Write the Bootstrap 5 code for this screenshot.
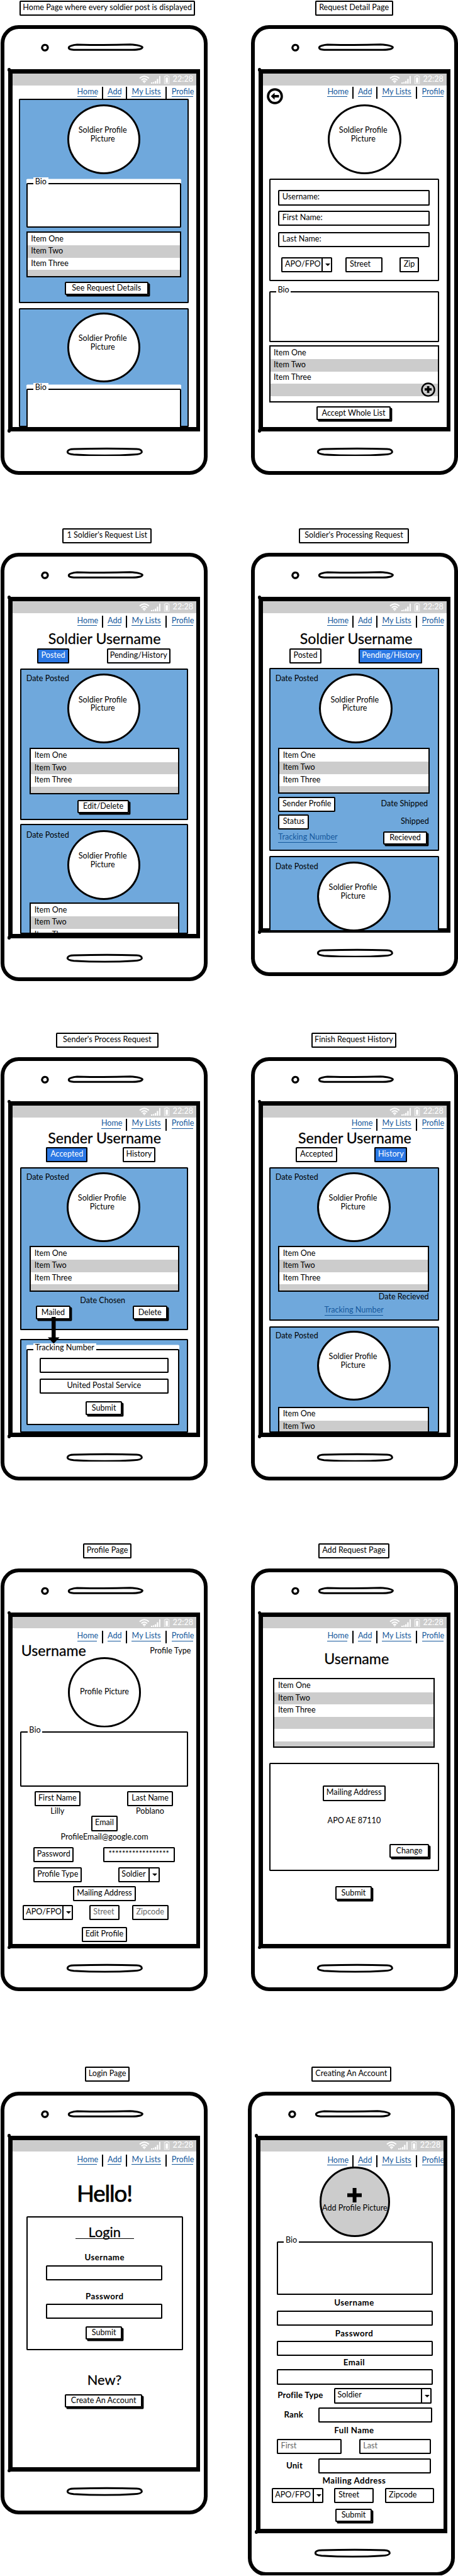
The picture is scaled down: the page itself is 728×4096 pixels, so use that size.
<!DOCTYPE html>
<html lang="en">
<head>
<meta charset="utf-8">
<meta name="viewport" content="width=device-width, initial-scale=1">
<title>Soldier request app wireframes</title>
<link href="https://cdn.jsdelivr.net/npm/bootstrap@5.3.0/dist/css/bootstrap.min.css" rel="stylesheet">
<style>
body{background:#fff;overflow:hidden}
.board{zoom:.92739;width:785px;height:4416px;padding-top:1px;display:grid;grid-template-columns:429px 356px;grid-template-rows:904.5px 864.7px 876.3px 896.9px 872.6px;color:#000;font:13.6px/16px Lato,"Liberation Sans",sans-serif;white-space:nowrap;overflow:hidden}
.board *{border-radius:0}
/* cells: odd tracks are gaps, even tracks hold the items */
.cells{display:grid;align-items:start}
.cells>:nth-child(1){grid-column:2}
.cells>:nth-child(2){grid-column:4}
.cells>:nth-child(3){grid-column:6}
.stack{display:grid;align-content:start}
.ink,.stack .btn,.tag,.field,.lister{outline:2.5px solid #000;outline-offset:-2.5px}
.tag,.field{display:block;height:26px;line-height:24px;text-align:center;background:#fff}
.board .ink,.board .tag,.board .field,.board .btn{border-radius:2px}
.tag.on{background:#2b78e4;color:#fff}
.field{text-align:left;padding-left:7px}
.ghost{color:#666}
.pick{display:flex;padding-left:6px}
.pick i{margin-left:auto;width:18.5px;border-left:2.2px solid #000;display:flex;align-items:center;justify-content:center}
.pick i::after{content:"";border:4.5px solid transparent;border-top-color:#000;border-bottom:0}
.stack .btn{display:block;height:23px;line-height:22px;padding:0;border:0;background:#fff;color:#000;font-size:inherit;box-shadow:2.6px 2.8px 0 #000}
.board .lister{display:block;background:#fff;padding-top:3px;overflow:hidden;height:79px}
.lister .list-group-item{position:static;height:21px;border:0;padding:0 8px;line-height:18.5px;color:#000;background:#fff}
.lister .list-group-item:nth-child(even){background:#ccc}
.stack .pic{width:126px;height:120px;border:3.3px solid #000;border-radius:50%;background:#fff;display:flex;align-items:center;justify-content:center;text-align:center;line-height:15px;padding:0 4px 16px 0}
.pane{background:#6fa8dc;position:relative}
.clip{overflow:hidden}
.group{position:relative;box-shadow:0 -7px 0 #fff;background:#fff}
.group>b{position:absolute;z-index:1;left:12px;top:-10px;padding:0 3px;background:#fff;font-weight:400;line-height:16px}
.dated{display:flex;padding-left:11px}
.dated>span{line-height:18px}
.mid{text-align:center}
.strong{font-weight:700;font-size:14.3px;letter-spacing:.5px;text-align:center}
.h24{font-size:25px;line-height:24px;text-align:center;font-weight:400;-webkit-text-stroke:.3px #000}
/* phone */
.phone{position:relative;width:355px;margin-left:1px;border:6.5px solid #000;border-radius:31px!important}
.top{height:69px;position:relative}
.phone svg{display:block}
.scr{margin:0 7px;border:7.6px solid #000;border-right-width:6.5px;position:relative;align-content:start}
.scr::before,.scr::after{content:"";position:absolute;left:-9px;width:5px;height:6px;background:#000;border-radius:50%}
.scr::before{top:-10px}.scr::after{bottom:-9px}
.chin{height:67px;padding:26px 0 0 105px}
.bar{background:#ccc;color:#fff;height:20px;padding-right:5px;display:flex;align-items:center;justify-content:flex-end}
.menu{display:flex;justify-content:flex-end;padding:2px 5px 0 0;flex-wrap:nowrap}
.menu a{color:#16599c;text-decoration:none;border-bottom:1.1px solid #16599c;line-height:15px;height:17px;text-align:center;margin-top:1px;padding:0}
.menu a+a{position:relative;margin-left:18.3px}
.menu a+a::before{content:"";position:absolute;left:-10px;top:-1px;width:2.2px;height:21px;background:#000}
.l-h{width:34px}.l-a{width:23px}.l-m{width:50px}.l-p{width:37px}
.lnk{color:#16599c;border-bottom:1.1px solid #16599c;text-decoration:none;line-height:16px;text-align:center}
.over{position:absolute;z-index:2}

/* title tags */
.t1{grid-template-columns:33.5px 301px}.t2{grid-template-columns:110.7px 134px}.t3{grid-template-columns:107px 153px}.t4{grid-template-columns:83.3px 188.5px}.t5{grid-template-columns:95.5px 176px}.t6{grid-template-columns:104.3px 146.5px}.t7{grid-template-columns:142.5px 83px}.t8{grid-template-columns:116.3px 122.5px}.t9{grid-template-columns:145.5px 77px}.t10{grid-template-columns:109.5px 137px}
.titles{height:42.6px}

.s1{height:621.1px;grid-template-rows:20px 23px 359px 204px}
.s1 .box,.s2 .box,.s4 .box,.s6 .box,.s8 .box{grid-template-columns:10px 292px}
.s1 .p1{height:350px;padding-top:9px;grid-template-rows:135px 83px 86px 37px}
.s1 .p2{height:204px;padding-top:7px;grid-template-rows:131px 90px}
.s1 .pc{grid-template-columns:83px 126px}.s1 .in{grid-template-columns:13px 266px}.s1 .bt{grid-template-columns:79px 143px}
.s1 .group{height:76.5px}

.s2{height:621.1px;grid-template-rows:20px 32px 128px 193px 92.5px 105px 35px}
.s2 .pc{grid-template-columns:110.5px 126px}.s2 .bt{grid-template-columns:91px 128px}
.s2 .form{height:175px;padding-top:19.5px;grid-template-rows:35.5px 36px 43px 41px}
.s2 .in{grid-template-columns:16px 260px}.s2 .ad{grid-template-columns:21.5px 87px 23px 63px 29.5px 33.5px}
.s2 .group{height:87px}.s2 .lister{height:97.5px}
.back{left:6.5px;top:24.5px}.plus{left:260px;top:63.5px}

.s3{height:585.6px;grid-template-rows:20px 32px 29px 34px 267px 188px}
.s3 .menu,.s4 .menu,.s7 .menu,.s8 .menu{padding-top:4.3px}
.s3 .box,.s5 .box{grid-template-columns:12px 288px}
.s3 .tb{grid-template-columns:42px 54.5px 64.5px 109px}
.s3 .p1{height:260px;padding-top:9px;grid-template-rows:127.4px 88.6px 35px}
.s3 .p2{height:188px;padding-top:10px;grid-template-rows:124.4px 88px}
.s3 .dated>span{width:70px}
.s3 .in,.s5 .in{grid-template-columns:17px 256px}.s3 .bt{grid-template-columns:99px 88px}

.s4{height:576.1px;grid-template-rows:20px 32px 29px 33px 322px 130px}
.s4 .h24{padding-left:5px}
.s4 .tb{grid-template-columns:45.5px 54px 64.5px 109px}
.s4 .p1{height:314px;padding-top:10px;grid-template-rows:127px 84.5px 29.5px 29px 34px}
.s4 .p1 .dated>span{width:75px}.s4 .p2 .dated>span,.s6 .dated>span{width:72px}
.s4 .p2{height:130px;padding-top:10px;z-index:1}
.s4 .in{grid-template-columns:16px 260px}
.s4 .a{grid-template-columns:16px 98px 78px 80px}.s4 .b{grid-template-columns:16px 53px 157px 48px}.s4 .c{grid-template-columns:16px 101px 79px 75px}
.s4 .a span,.s4 .b span{line-height:24px}.s4 .a .mid,.s4 .b .mid{text-align:right}
.s4 .c .lnk{margin-top:3px}

.s5{height:576.1px;grid-template-rows:20px 23px 28px 35px 294px 161px}
.s5 .tb{grid-template-columns:57px 71px 60.5px 55.5px}
.s5 .p1{height:279px;padding-top:8px;grid-template-rows:126.3px 86.2px 16.8px 40px;z-index:2}
.s5 .dated>span{width:69px}
.s5 .mid{padding-right:4px}
.s5 .bt{grid-template-columns:27px 60px 106px 60px}
.arrow{left:48px;top:256px}
.s5 .p2{height:160.5px;padding-top:17px}
.s5 .fs{grid-template-columns:11px 262px}
.s5 .group{height:131px;padding-top:15.4px;grid-template-rows:35.2px 39.4px 41px}
.s5 .f{grid-template-columns:23px 220.5px}.s5 .g{grid-template-columns:102px 62px}

.s6{height:576.1px;grid-template-rows:20px 23px 28px 35px 272px 183px}
.s6 .tb{grid-template-columns:56px 71px 64px 56px}
.s6 .p1{height:263px;padding-top:8px;grid-template-rows:126.3px 80.4px 22px 30px}
.s6 .p2{height:183px;padding-top:8px;grid-template-rows:130px 88px}
.s6 .in{grid-template-columns:16px 258px}.s6 .a{grid-template-columns:188px 86px}.s6 .b{grid-template-columns:95px 101px}

.s7{height:576.1px;grid-template-rows:20px 25px 24.5px 127.5px 101.7px 27.3px 15.5px 28.5px 24.5px 34.5px 33px 32px 37.5px 29.5px}
.s7 .ti{grid-template-columns:14px 112px 109px 70px}.s7 .ti span{line-height:25px}
.s7 .pc{grid-template-columns:94px 126px}.s7 .bi{grid-template-columns:13px 287px}.s7 .group{height:94px}
.s7 .pic{padding:0 0 2px}
.s7 .nm{grid-template-columns:37.5px 78px 80.5px 78.5px}.s7 .em{grid-template-columns:134.5px 45px}
.s7 .pw{grid-template-columns:35.5px 69px 50px 123px}.s7 .pt{grid-template-columns:35.5px 83px 62px 71px}
.s7 .ma{grid-template-columns:103.5px 107px}.s7 .ad{grid-template-columns:16.5px 87px 27.5px 51.5px 22px 62px}.s7 .ed{grid-template-columns:118.5px 77px}

.s8{height:576.1px;grid-template-rows:20px 40px 45.3px 145.1px 211.6px 99px}
.s8 .h24{padding-left:6px}
.s8 .ls{grid-template-columns:17.5px 276.5px}.s8 .lister{height:119.7px}
.s8 .form{height:185.4px;padding-top:39.3px;grid-template-rows:52.3px 48px 46px}
.s8 .ma{grid-template-columns:92px 107.5px}.s8 .ch{grid-template-columns:207px 67px}.s8 .bt{grid-template-columns:124px 62px}

.s9{height:576.1px;grid-template-rows:20px 49px 61.5px 268.5px 37px 125px}
.s9 .menu{padding-top:5px}
.s9 .hello{font-size:39.5px;letter-spacing:-1.2px;line-height:44px;text-align:center;font-weight:400;-webkit-text-stroke:.8px #000}
.s9 .h24{font-size:23.5px}
.s9 .bx9{grid-template-columns:23px 268.5px}
.s9 .form{height:230px;padding-top:16px;grid-template-rows:47px 21.6px 45px 20.8px 38.3px 41px}
.s9 .rule{display:block;width:100px;height:1.4px;margin:-2px auto 0;background:#000}
.s9 .f{grid-template-columns:34px 199.5px}.s9 .g{grid-template-columns:102px 62px}.s9 .bt{grid-template-columns:89px 133px}

.last{margin-left:-5px}
.s10{height:681.6px;grid-template-rows:20px 26.2px 127.7px 97.1px 21.5px 31px 21px 29px 20px 32.4px 33.3px 30.8px 22.9px 33.6px 29.5px 21.1px 35px 34.4px}
.s10 .menu{padding:6px 0 0}
.s10 .pc{grid-template-columns:102px 120px}.s10 .pic{width:120px;background:#ccc;flex-direction:column;padding:0 0 6px}
.s10 .pic svg{margin-bottom:2px}
.s10 .bi{grid-template-columns:28.5px 267px}.s10 .group{height:91.6px}
.s10 .strong{padding-left:8px}.s10 .cells .strong{padding:0;line-height:24px;letter-spacing:.2px}
.s10 .pt{grid-template-columns:28.5px 80.5px 17.5px 167.5px}.s10 .rk{grid-template-columns:40.5px 33.5px 25.5px 195.5px}
.s10 .fn{grid-template-columns:28.5px 111.5px 29.5px 123.5px}.s10 .un{grid-template-columns:44.5px 27.5px 27.5px 193.5px}
.s10 .ad{grid-template-columns:19.5px 89px 18.5px 67px 19.5px 84.5px}.s10 .bt{grid-template-columns:129px 62px}
</style>
</head>
<body>
<svg width="0" height="0" class="position-absolute" aria-hidden="true">
  <symbol id="top" viewBox="0 0 343 70"><g fill="none" stroke="#000"><ellipse cx="68" cy="32.500" rx="5" ry="4.800" stroke-width="3.600" transform="rotate(-20 68 32.500)"/><path d="M109.500 32C111 29 117 28 124 27.300C150 28 190 28 216 27.200C228 28 236 29 237.500 32C237 35 228 36.500 220 36.500H118C112 36 109 35 109.500 32Z" stroke-width="3.300"/></g></symbol>
  <symbol id="pill" viewBox="0 0 134 16"><path d="M3.500 8C4 4 10 3.200 16 3.300C50 2.300 90 2.300 122 3.200C128 3.500 131 5 131 8.500C130 11.500 124 12.500 118 12.600C90 14.500 45 14.500 14 12.600C8 12 3.500 11 3.500 8Z" fill="none" stroke="#000" stroke-width="3.200"/></symbol>
  <symbol id="stat" viewBox="0 0 54 16"><g fill="none" stroke="#fff" stroke-width="2"><path d="M1 6Q9 -1 17 6M4 9Q9 4.500 14 9M6.500 11.500Q9 9.500 11.500 11.500"/></g><path d="M7 12.300H11L9 14.500Z" fill="#fff"/><path d="M20.500 13H23V15H20.500ZM24 12.200H26V15H24ZM27 10.500H29.500V15H27ZM30.500 7H33V15H30.500ZM34.500 2H36.500V15H34.500Z" fill="#fff"/><path d="M45 2.500H46V1.500H49V2.500H51.500V15H43.500V2.500Z" fill="none" stroke="#eee" stroke-width="1.300"/><path d="M45.500 4.500H49.500V13.500H45.500Z" fill="#fff"/></symbol>
</svg>
<main class="board">

<section>
  <div class="titles cells t1"><span class="tag">Home Page where every soldier post is displayed</span></div>
  <div class="phone"><svg class="top" width="343" height="70"><use href="#top"/></svg>
    <div class="scr stack s1">
      <div class="bar"><svg width="54" height="16"><use href="#stat"/></svg><span class="ms-1">22:28</span></div>
      <nav class="menu nav"><a class="l-h" href="#">Home</a><a class="l-a" href="#">Add</a><a class="l-m" href="#">My Lists</a><a class="l-p" href="#">Profile</a></nav>
      <div class="cells box"><article class="pane ink stack p1">
        <div class="cells pc"><div class="pic">Soldier Profile<br>Picture</div></div>
        <div class="cells in"><div class="group ink"><b>Bio</b></div></div>
        <div class="cells in"><ul class="list-group lister"><li class="list-group-item">Item One</li><li class="list-group-item">Item Two</li><li class="list-group-item">Item Three</li><li class="list-group-item"></li></ul></div>
        <div class="cells bt"><button class="btn">See Request Details</button></div>
      </article></div>
      <div class="cells box"><article class="pane ink stack clip p2">
        <div class="cells pc"><div class="pic">Soldier Profile<br>Picture</div></div>
        <div class="cells in"><div class="group ink"><b>Bio</b></div></div>
      </article></div>
    </div>
    <div class="chin"><svg width="134" height="16"><use href="#pill"/></svg></div>
  </div>
</section>

<section>
  <div class="titles cells t2"><span class="tag">Request Detail Page</span></div>
  <div class="phone"><svg class="top" width="343" height="70"><use href="#top"/></svg>
    <div class="scr stack s2">
      <svg class="over back" width="28" height="28" viewBox="0 0 28 28"><circle cx="14" cy="14" r="11.800" fill="#fff" stroke="#000" stroke-width="4"/><path d="M7 14L13.500 8V11.800H21V16.200H13.500V20Z"/></svg>
      <div class="bar"><svg width="54" height="16"><use href="#stat"/></svg><span class="ms-1">22:28</span></div>
      <nav class="menu nav"><a class="l-h" href="#">Home</a><a class="l-a" href="#">Add</a><a class="l-m" href="#">My Lists</a><a class="l-p" href="#">Profile</a></nav>
      <div class="cells pc"><div class="pic">Soldier Profile<br>Picture</div></div>
      <div class="cells box"><div class="ink stack form">
        <div class="cells in"><span class="field">Username:</span></div>
        <div class="cells in"><span class="field">First Name:</span></div>
        <div class="cells in"><span class="field">Last Name:</span></div>
        <div class="cells ad"><span class="field pick">APO/FPO<i></i></span><span class="field">Street</span><span class="field">Zip</span></div>
      </div></div>
      <div class="cells box"><div class="group ink"><b>Bio</b></div></div>
      <div class="cells box"><ul class="list-group lister position-relative"><li class="list-group-item">Item One</li><li class="list-group-item">Item Two</li><li class="list-group-item">Item Three</li><li class="list-group-item"></li><li class="list-group-item"><svg class="over plus" width="25" height="25" viewBox="0 0 25 25"><circle cx="12.500" cy="12.500" r="10.800" fill="#ccc" stroke="#000" stroke-width="2.600"/><path d="M12.500 6.500V18M6.500 12H18.500" stroke="#000" stroke-width="4"/></svg></li></ul></div>
      <div class="cells bt"><button class="btn">Accept Whole List</button></div>
    </div>
    <div class="chin"><svg width="134" height="16"><use href="#pill"/></svg></div>
  </div>
</section>

<section>
  <div class="titles cells t3"><span class="tag">1 Soldier's Request List</span></div>
  <div class="phone"><svg class="top" width="343" height="70"><use href="#top"/></svg>
    <div class="scr stack s3">
      <div class="bar"><svg width="54" height="16"><use href="#stat"/></svg><span class="ms-1">22:28</span></div>
      <nav class="menu nav"><a class="l-h" href="#">Home</a><a class="l-a" href="#">Add</a><a class="l-m" href="#">My Lists</a><a class="l-p" href="#">Profile</a></nav>
      <div class="h24">Soldier Username</div>
      <div class="cells tb"><span class="tag on">Posted</span><span class="tag">Pending/History</span></div>
      <div class="cells box"><article class="pane ink stack p1">
        <div class="dated"><span>Date Posted</span><div class="pic">Soldier Profile<br>Picture</div></div>
        <div class="cells in"><ul class="list-group lister"><li class="list-group-item">Item One</li><li class="list-group-item">Item Two</li><li class="list-group-item">Item Three</li><li class="list-group-item"></li></ul></div>
        <div class="cells bt"><button class="btn">Edit/Delete</button></div>
      </article></div>
      <div class="cells box"><article class="pane ink stack clip p2">
        <div class="dated"><span>Date Posted</span><div class="pic">Soldier Profile<br>Picture</div></div>
        <div class="cells in"><ul class="list-group lister"><li class="list-group-item">Item One</li><li class="list-group-item">Item Two</li><li class="list-group-item">Item Three</li></ul></div>
      </article></div>
    </div>
    <div class="chin"><svg width="134" height="16"><use href="#pill"/></svg></div>
  </div>
</section>

<section>
  <div class="titles cells t4"><span class="tag">Soldier's Processing Request</span></div>
  <div class="phone"><svg class="top" width="343" height="70"><use href="#top"/></svg>
    <div class="scr stack s4">
      <div class="bar"><svg width="54" height="16"><use href="#stat"/></svg><span class="ms-1">22:28</span></div>
      <nav class="menu nav"><a class="l-h" href="#">Home</a><a class="l-a" href="#">Add</a><a class="l-m" href="#">My Lists</a><a class="l-p" href="#">Profile</a></nav>
      <div class="h24">Soldier Username</div>
      <div class="cells tb"><span class="tag">Posted</span><span class="tag on">Pending/History</span></div>
      <div class="cells box"><article class="pane ink stack p1">
        <div class="dated"><span>Date Posted</span><div class="pic">Soldier Profile<br>Picture</div></div>
        <div class="cells in"><ul class="list-group lister"><li class="list-group-item">Item One</li><li class="list-group-item">Item Two</li><li class="list-group-item">Item Three</li><li class="list-group-item"></li></ul></div>
        <div class="cells a"><span class="tag">Sender Profile</span><span class="mid">Date Shipped</span></div>
        <div class="cells b"><span class="tag">Status</span><span class="mid">Shipped</span></div>
        <div class="cells c"><a class="lnk" href="#">Tracking Number</a><button class="btn">Recieved</button></div>
      </article></div>
      <div class="cells box"><article class="pane ink stack clip p2">
        <div class="dated"><span>Date Posted</span><div class="pic">Soldier Profile<br>Picture</div></div>
      </article></div>
    </div>
    <div class="chin"><svg width="134" height="16"><use href="#pill"/></svg></div>
  </div>
</section>

<section>
  <div class="titles cells t5"><span class="tag">Sender's Process Request</span></div>
  <div class="phone"><svg class="top" width="343" height="70"><use href="#top"/></svg>
    <div class="scr stack s5">
      <div class="bar"><svg width="54" height="16"><use href="#stat"/></svg><span class="ms-1">22:28</span></div>
      <nav class="menu nav"><a class="l-h" href="#">Home</a><a class="l-m" href="#">My Lists</a><a class="l-p" href="#">Profile</a></nav>
      <div class="h24">Sender Username</div>
      <div class="cells tb"><span class="tag on">Accepted</span><span class="tag">History</span></div>
      <div class="cells box"><article class="pane ink stack p1">
        <div class="dated"><span>Date Posted</span><div class="pic">Soldier Profile<br>Picture</div></div>
        <div class="cells in"><ul class="list-group lister"><li class="list-group-item">Item One</li><li class="list-group-item">Item Two</li><li class="list-group-item">Item Three</li><li class="list-group-item"></li></ul></div>
        <div class="mid">Date Chosen</div>
        <div class="cells bt"><button class="btn">Mailed</button><button class="btn">Delete</button></div>
        <svg class="over arrow" width="20" height="46" viewBox="0 0 20 46"><path d="M6.500 0H13.500V35H20L10 46L0 35H6.500Z"/></svg>
      </article></div>
      <div class="cells box"><article class="pane ink stack p2">
        <div class="cells fs"><div class="group ink stack"><b>Tracking Number</b>
          <div class="cells f"><span class="tag"></span></div>
          <div class="cells f"><span class="tag">United Postal Service</span></div>
          <div class="cells g"><button class="btn">Submit</button></div>
        </div></div>
      </article></div>
    </div>
    <div class="chin"><svg width="134" height="16"><use href="#pill"/></svg></div>
  </div>
</section>

<section>
  <div class="titles cells t6"><span class="tag">Finish Request History</span></div>
  <div class="phone"><svg class="top" width="343" height="70"><use href="#top"/></svg>
    <div class="scr stack s6">
      <div class="bar"><svg width="54" height="16"><use href="#stat"/></svg><span class="ms-1">22:28</span></div>
      <nav class="menu nav"><a class="l-h" href="#">Home</a><a class="l-m" href="#">My Lists</a><a class="l-p" href="#">Profile</a></nav>
      <div class="h24">Sender Username</div>
      <div class="cells tb"><span class="tag">Accepted</span><span class="tag on">History</span></div>
      <div class="cells box"><article class="pane ink stack p1">
        <div class="dated"><span>Date Posted</span><div class="pic">Soldier Profile<br>Picture</div></div>
        <div class="cells in"><ul class="list-group lister"><li class="list-group-item">Item One</li><li class="list-group-item">Item Two</li><li class="list-group-item">Item Three</li><li class="list-group-item"></li></ul></div>
        <div class="cells a"><span class="mid">Date Recieved</span></div>
        <div class="cells b"><a class="lnk" href="#">Tracking Number</a></div>
      </article></div>
      <div class="cells box"><article class="pane ink stack clip p2">
        <div class="dated"><span>Date Posted</span><div class="pic">Soldier Profile<br>Picture</div></div>
        <div class="cells in"><ul class="list-group lister"><li class="list-group-item">Item One</li><li class="list-group-item">Item Two</li></ul></div>
      </article></div>
    </div>
    <div class="chin"><svg width="134" height="16"><use href="#pill"/></svg></div>
  </div>
</section>

<section>
  <div class="titles cells t7"><span class="tag">Profile Page</span></div>
  <div class="phone"><svg class="top" width="343" height="70"><use href="#top"/></svg>
    <div class="scr stack s7">
      <div class="bar"><svg width="54" height="16"><use href="#stat"/></svg><span class="ms-1">22:28</span></div>
      <nav class="menu nav"><a class="l-h" href="#">Home</a><a class="l-a" href="#">Add</a><a class="l-m" href="#">My Lists</a><a class="l-p" href="#">Profile</a></nav>
      <div class="cells ti"><div class="h24">Username</div><span class="mid">Profile Type</span></div>
      <div class="cells pc"><div class="pic">Profile Picture</div></div>
      <div class="cells bi"><div class="group ink"><b>Bio</b></div></div>
      <div class="cells nm"><span class="tag">First Name</span><span class="tag">Last Name</span></div>
      <div class="cells nm"><span class="mid">Lilly</span><span class="mid">Poblano</span></div>
      <div class="cells em"><span class="tag">Email</span></div>
      <div class="mid">ProfileEmail@google.com</div>
      <div class="cells pw"><span class="tag">Password</span><span class="tag">******************</span></div>
      <div class="cells pt"><span class="tag">Profile Type</span><span class="field pick">Soldier<i></i></span></div>
      <div class="cells ma"><span class="tag">Mailing Address</span></div>
      <div class="cells ad"><span class="field pick">APO/FPO<i></i></span><span class="field ghost">Street</span><span class="field ghost">Zipcode</span></div>
      <div class="cells ed"><span class="tag">Edit Profile</span></div>
    </div>
    <div class="chin"><svg width="134" height="16"><use href="#pill"/></svg></div>
  </div>
</section>

<section>
  <div class="titles cells t8"><span class="tag">Add Request Page</span></div>
  <div class="phone"><svg class="top" width="343" height="70"><use href="#top"/></svg>
    <div class="scr stack s8">
      <div class="bar"><svg width="54" height="16"><use href="#stat"/></svg><span class="ms-1">22:28</span></div>
      <nav class="menu nav"><a class="l-h" href="#">Home</a><a class="l-a" href="#">Add</a><a class="l-m" href="#">My Lists</a><a class="l-p" href="#">Profile</a></nav>
      <div class="h24">Username</div>
      <div class="cells ls"><ul class="list-group lister"><li class="list-group-item">Item One</li><li class="list-group-item">Item Two</li><li class="list-group-item">Item Three</li><li class="list-group-item"></li><li class="list-group-item"></li><li class="list-group-item"></li></ul></div>
      <div class="cells box"><div class="ink stack form">
        <div class="cells ma"><span class="tag">Mailing Address</span></div>
        <div class="mid">APO AE 87110</div>
        <div class="cells ch"><button class="btn">Change</button></div>
      </div></div>
      <div class="cells bt"><button class="btn">Submit</button></div>
    </div>
    <div class="chin"><svg width="134" height="16"><use href="#pill"/></svg></div>
  </div>
</section>

<section>
  <div class="titles cells t9"><span class="tag">Login Page</span></div>
  <div class="phone"><svg class="top" width="343" height="70"><use href="#top"/></svg>
    <div class="scr stack s9">
      <div class="bar"><svg width="54" height="16"><use href="#stat"/></svg><span class="ms-1">22:28</span></div>
      <nav class="menu nav"><a class="l-h" href="#">Home</a><a class="l-a" href="#">Add</a><a class="l-m" href="#">My Lists</a><a class="l-p" href="#">Profile</a></nav>
      <div class="hello">Hello!</div>
      <div class="cells bx9"><form class="ink stack form">
        <div class="h24">Login<span class="rule"></span></div>
        <div class="strong">Username</div>
        <div class="cells f"><span class="field"></span></div>
        <div class="strong">Password</div>
        <div class="cells f"><span class="field"></span></div>
        <div class="cells g"><button type="button" class="btn">Submit</button></div>
      </form></div>
      <div class="h24">New?</div>
      <div class="cells bt"><button class="btn">Create An Account</button></div>
    </div>
    <div class="chin"><svg width="134" height="16"><use href="#pill"/></svg></div>
  </div>
</section>

<section class="last">
  <div class="titles cells t10"><span class="tag">Creating An Account</span></div>
  <div class="phone"><svg class="top" width="343" height="70"><use href="#top"/></svg>
    <div class="scr stack s10">
      <div class="bar"><svg width="54" height="16"><use href="#stat"/></svg><span class="ms-1">22:28</span></div>
      <nav class="menu nav"><a class="l-h" href="#">Home</a><a class="l-a" href="#">Add</a><a class="l-m" href="#">My Lists</a><a class="l-p" href="#">Profile</a></nav>
      <div class="cells pc"><div class="pic"><svg width="25" height="25" viewBox="0 0 25 25"><path d="M12.500 3V22M3 12.500H22" stroke="#000" stroke-width="6.500" stroke-linecap="square"/></svg>Add Profile Picture</div></div>
      <div class="cells bi"><div class="group ink"><b>Bio</b></div></div>
      <div class="strong">Username</div>
      <div class="cells bi"><span class="field"></span></div>
      <div class="strong">Password</div>
      <div class="cells bi"><span class="field"></span></div>
      <div class="strong">Email</div>
      <div class="cells bi"><span class="field"></span></div>
      <div class="cells pt"><span class="strong">Profile Type</span><span class="field pick">Soldier<i></i></span></div>
      <div class="cells rk"><span class="strong">Rank</span><span class="field"></span></div>
      <div class="strong">Full Name</div>
      <div class="cells fn"><span class="field ghost">First</span><span class="field ghost">Last</span></div>
      <div class="cells un"><span class="strong">Unit</span><span class="field"></span></div>
      <div class="strong">Mailing Address</div>
      <div class="cells ad"><span class="field pick">APO/FPO<i></i></span><span class="field">Street</span><span class="field">Zipcode</span></div>
      <div class="cells bt"><button class="btn">Submit</button></div>
    </div>
    <div class="chin"><svg width="134" height="16"><use href="#pill"/></svg></div>
  </div>
</section>

</main>
<script src="https://cdn.jsdelivr.net/npm/bootstrap@5.3.0/dist/js/bootstrap.bundle.min.js"></script>
</body>
</html>
